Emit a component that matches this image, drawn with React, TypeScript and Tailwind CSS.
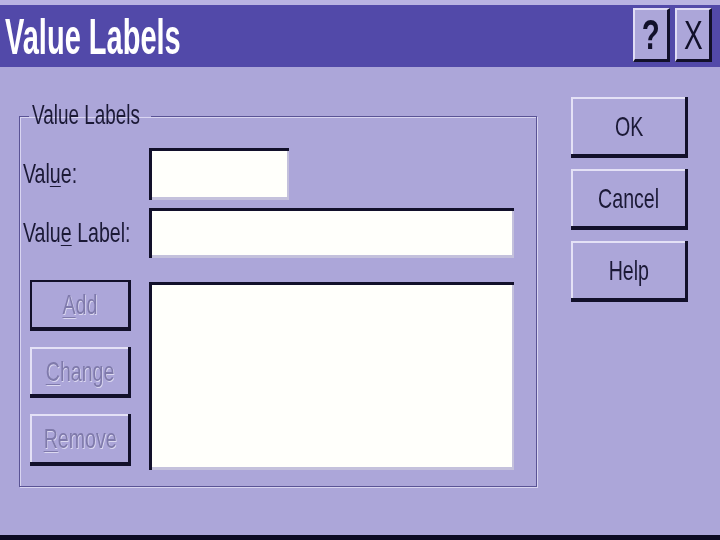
import React from "react";

const arial = { fontFamily: '"Liberation Sans", Arial, sans-serif' };

// Text in the screenshot is a stretched Arial, so squeeze it horizontally.
function N({
  children,
  className = "",
  origin = "origin-left",
}: {
  children: React.ReactNode;
  className?: string;
  origin?: string;
}) {
  return (
    <span
      className={`inline-block shrink-0 whitespace-nowrap scale-x-[0.7] ${origin} ${className}`}
      style={arial}
    >
      {children}
    </span>
  );
}

function U({ children }: { children: React.ReactNode }) {
  return <span className="underline decoration-1 underline-offset-[3px]">{children}</span>;
}

function Btn({
  label,
  u,
  disabled,
  isDefault,
  className = "",
}: {
  label: string;
  u?: number;
  disabled?: boolean;
  isDefault?: boolean;
  className?: string;
}) {
  const text =
    u === undefined ? (
      label
    ) : (
      <>
        {label.slice(0, u)}
        <U>{label[u]}</U>
        {label.slice(u + 1)}
      </>
    );
  return (
    <div
      className={`flex border-[#12102a] ${
        isDefault ? "border-2 border-b-[4px] border-r-[3px]" : "border-b-[4px] border-r-[3px]"
      } ${className}`}
    >
      <div
        className={`flex h-full w-full items-center justify-center overflow-hidden ${
          isDefault ? "" : "border-l-2 border-t-2 border-[#e4e1f6]"
        }`}
      >
        <N
          origin="origin-center"
          className={`text-[28px] leading-none ${
            disabled ? "text-[#7f7aab] [text-shadow:1px_1px_0_#dcd9f1]" : "text-[#1b1936]"
          }`}
        >
          {text}
        </N>
      </div>
    </div>
  );
}

function Field({ className = "" }: { className?: string }) {
  return (
    <div className={`border-l-[3px] border-t-[3px] border-[#12102a] ${className}`}>
      <div className="h-full w-full border-b-[3px] border-r-[2px] border-[#c4c1dc] bg-[#fffffb]" />
    </div>
  );
}

export default function App() {
  return (
    <div className="flex h-[540px] w-[720px] flex-col overflow-hidden bg-[#aca6d9]">
      <div className="h-[5px] bg-[#b9b3e2]" />
      <div className="flex h-[62px] justify-between bg-[#5249a9] pl-[5px] pr-[8px]">
        <div className="flex items-center pt-[2px]">
          <span
            className="inline-block whitespace-nowrap text-[50px] font-bold leading-none text-white scale-x-[0.58] origin-left"
            style={arial}
          >
            Value Labels
          </span>
        </div>
        <div className="mt-[3px] flex gap-[5px]">
          <div className="flex h-[54px] w-[37px] items-center justify-center border-b-[3px] border-l-2 border-r-[3px] border-t-2 border-b-[#12102a] border-l-[#e0dcf5] border-r-[#12102a] border-t-[#e0dcf5] bg-[#aca6d9]">
            <span className="inline-block text-[42px] font-bold leading-none text-[#12102a] scale-x-[0.7]" style={arial}>
              ?
            </span>
          </div>
          <div className="flex h-[54px] w-[37px] items-center justify-center border-b-[3px] border-l-2 border-r-[3px] border-t-2 border-b-[#12102a] border-l-[#e0dcf5] border-r-[#12102a] border-t-[#e0dcf5] bg-[#aca6d9]">
            <span className="inline-block text-[40px] leading-none text-[#12102a] scale-x-[0.7]" style={arial}>
              X
            </span>
          </div>
        </div>
      </div>

      <div className="flex flex-1 pl-[19px] pt-[35px]">
        <fieldset className="h-[385px] w-[518px] border border-[#5a5395] shadow-[inset_1px_1px_0_#d9d5f1,1px_1px_0_#d9d5f1]">
          <legend className="ml-[9px] w-[122px] px-[3px]">
            <N className="text-[27px] leading-none text-[#1b1936]">Value Labels</N>
          </legend>
          <div className="flex flex-col pt-[18px]">
            <div className="flex h-[52px] items-center">
              <div className="w-[129px] pl-[3px]">
                <N className="text-[28px] leading-none text-[#1b1936]">
                  Val<U>u</U>e:
                </N>
              </div>
              <Field className="h-[52px] w-[140px]" />
            </div>
            <div className="mt-[8px] flex h-[50px] items-center">
              <div className="w-[129px] pl-[3px]">
                <N className="text-[28px] leading-none text-[#1b1936]">
                  Valu<U>e</U> Label:
                </N>
              </div>
              <Field className="h-[50px] w-[365px]" />
            </div>
            <div className="mt-[24px] flex">
              <div className="-mt-[2px] flex w-[129px] flex-col gap-[16px] pl-[10px]">
                <Btn label="Add" u={0} disabled isDefault className="h-[51px] w-[101px]" />
                <Btn label="Change" u={0} disabled className="h-[51px] w-[101px]" />
                <Btn label="Remove" u={0} disabled className="h-[52px] w-[101px]" />
              </div>
              <Field className="h-[188px] w-[365px]" />
            </div>
          </div>
        </fieldset>
        <div className="-mt-[5px] ml-[34px] flex flex-col gap-[11px]">
          <Btn label="OK" className="h-[61px] w-[117px]" />
          <Btn label="Cancel" className="h-[61px] w-[117px]" />
          <Btn label="Help" className="h-[61px] w-[117px]" />
        </div>
      </div>
      <div className="h-[5px] bg-[#0c0a22]" />
    </div>
  );
}
